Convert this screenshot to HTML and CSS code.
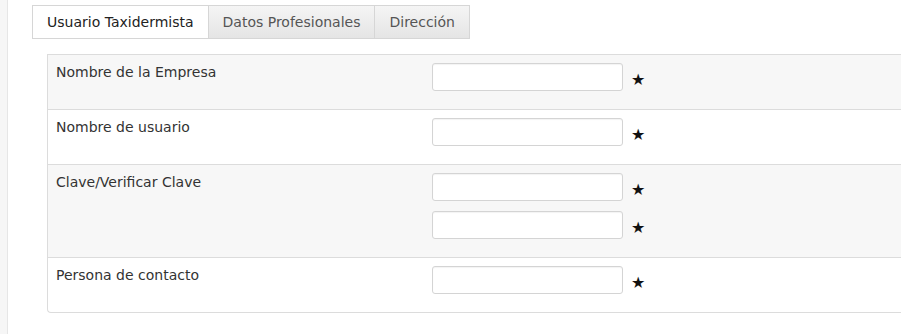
FILE: index.html
```html
<!DOCTYPE html>
<html>
<head>
    <title>Registro Taxidermista</title>
    <link rel="stylesheet" href="styles.css">
</head>
<body>
    <div class="sidebar"></div>

    <div class="content">
        <ul class="tabs">
            <li class="tab active">Usuario Taxidermista</li>
            <li class="tab">Datos Profesionales</li>
            <li class="tab">Dirección</li>
        </ul>

        <div class="panel">
            <div class="row shaded">
                <label class="row-label">Nombre de la Empresa</label>
                <div class="fields">
                    <div class="field"><input type="text"><span class="req">★</span></div>
                </div>
            </div>
            <div class="row">
                <label class="row-label">Nombre de usuario</label>
                <div class="fields">
                    <div class="field"><input type="text"><span class="req">★</span></div>
                </div>
            </div>
            <div class="row shaded">
                <label class="row-label">Clave/Verificar Clave</label>
                <div class="fields">
                    <div class="field"><input type="password"><span class="req">★</span></div>
                    <div class="field"><input type="password"><span class="req">★</span></div>
                </div>
            </div>
            <div class="row last">
                <label class="row-label">Persona de contacto</label>
                <div class="fields">
                    <div class="field"><input type="text"><span class="req">★</span></div>
                </div>
            </div>
        </div>
    </div>
</body>
</html>
```

FILE: styles.css
```css
html, body {
    height: 100%;
}
body {
    margin: 0;
    display: flex;
    overflow: hidden;
    background: #fff;
    font-family: "DejaVu Sans", Verdana, sans-serif;
    font-size: 14px;
    color: #333;
}
.sidebar {
    width: 7px;
    flex: none;
    background-color: #f6f6f6;
    border-right: 1px solid #e6e6e6;
}
.content {
    flex: 1;
    padding: 5px 0 0 24px;
    min-width: 0;
}
.tabs {
    list-style: none;
    margin: 0;
    padding: 0;
    display: inline-flex;
    border: 1px solid #d6d6d6;
}
.tab {
    padding: 0 14px;
    height: 32px;
    line-height: 32px;
    color: #555;
    background: linear-gradient(#f5f5f5, #e5e5e5);
    border-left: 1px solid #d6d6d6;
}
.tab.active {
    background: #fff;
    color: #222;
    border-left: none;
}
.panel {
    margin: 15px 0 0 15px;
    border: 1px solid #dcdcdc;
    border-right: none;
    border-radius: 0 0 0 4px;
}
.row {
    display: flex;
    padding: 8px 0 8px 8px;
    border-bottom: 1px solid #dcdcdc;
}
.row.last {
    border-bottom: none;
}
.row.shaded {
    background-color: #f7f7f7;
}
.row-label {
    width: 376px;
    flex: none;
    line-height: 18px;
    color: #333;
}
.fields {
    display: flex;
    flex-direction: column;
    gap: 10px;
    padding-bottom: 10px;
}
.field {
    display: flex;
    align-items: center;
}
.field input {
    box-sizing: border-box;
    width: 191px;
    height: 28px;
    margin: 0;
    padding: 4px 6px;
    border: 1px solid #d4d4d4;
    border-radius: 3px;
    background: #fff;
    box-shadow: inset 0 1px 1px rgba(0, 0, 0, 0.05);
}
.req {
    margin: 5px 0 0 8px;
    font-size: 16px;
    line-height: 16px;
    color: #111;
}
```
